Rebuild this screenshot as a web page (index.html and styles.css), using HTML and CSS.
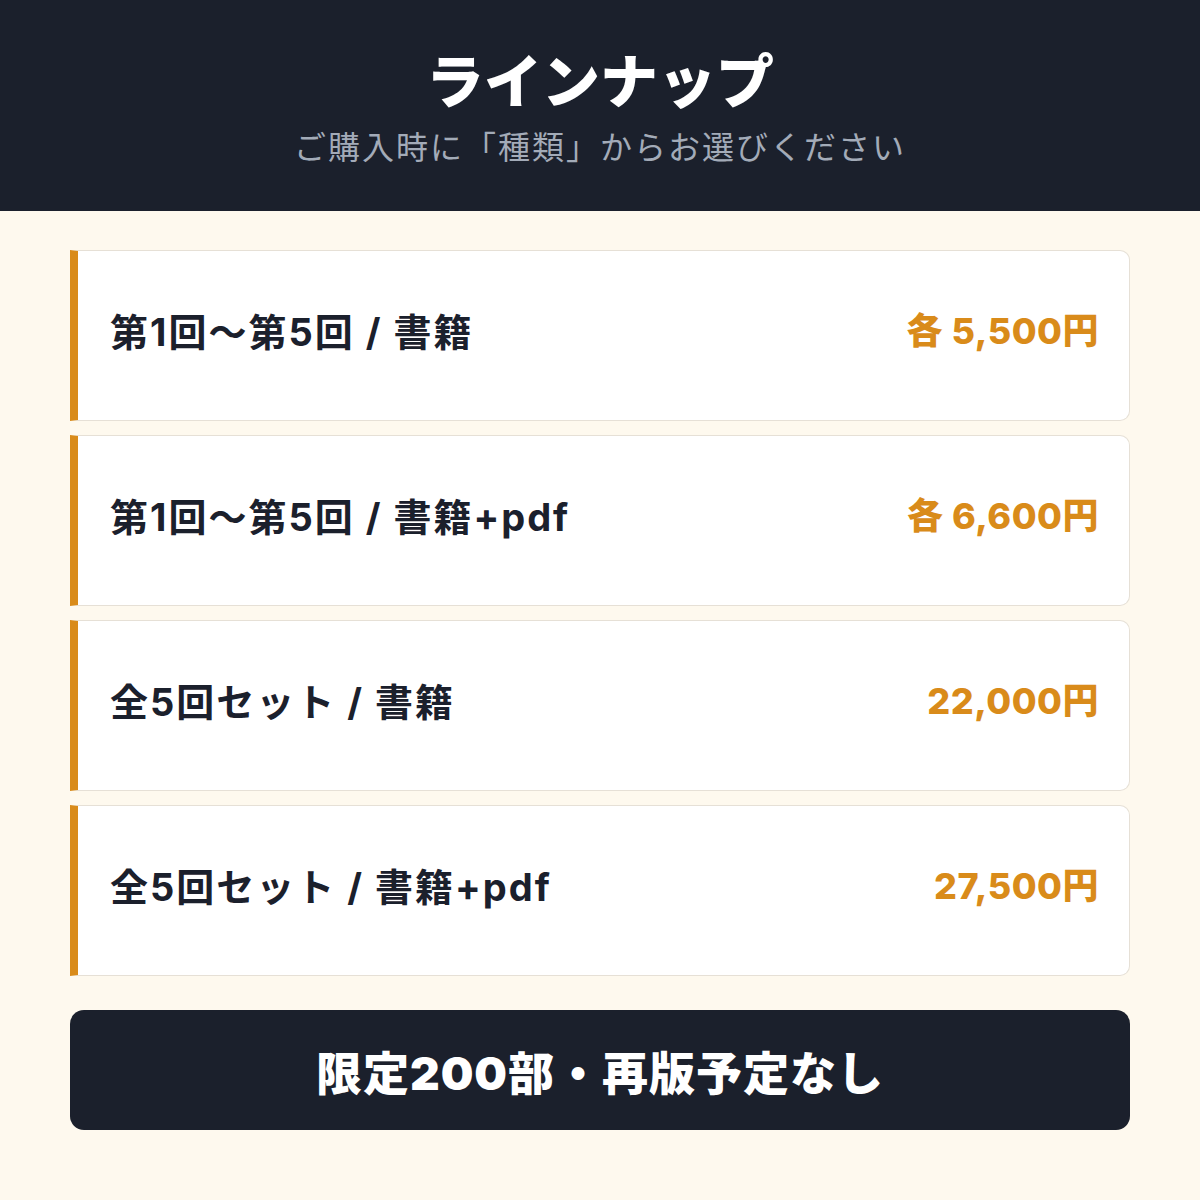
FILE: index.html
```html
<!DOCTYPE html>
<html lang="ja">
<head>
    <meta charset="UTF-8">
    <title>ラインナップ</title>
    <link rel="stylesheet" href="styles.css">
</head>
<body>
    <div class="header">
        <h1 class="title">ラインナップ</h1>
        <p class="subtitle">ご購入時に「種類」からお選びください</p>
    </div>
    <div class="main">
        <ul class="list">
            <li class="item"><span class="name">第1回〜第5回 / 書籍</span><span class="price">各 5,500円</span></li>
            <li class="item"><span class="name">第1回〜第5回 / 書籍+pdf</span><span class="price">各 6,600円</span></li>
            <li class="item"><span class="name">全5回セット / 書籍</span><span class="price">22,000円</span></li>
            <li class="item"><span class="name">全5回セット / 書籍+pdf</span><span class="price">27,500円</span></li>
        </ul>
        <div class="notice">限定200部・再版予定なし</div>
    </div>
</body>
</html>
```

FILE: styles.css
```css
* {
    margin: 0;
    padding: 0;
    box-sizing: border-box;
}
ul,li {
    list-style-type: none;
}
body {
    width: 1200px;
    height: 1200px;
    background: #fef9ee;
    font-family: Inter, "Noto Sans CJK JP", sans-serif;
    color: #1b202c;
}
/* header */
.header {
    height: 211px;
    background: #1b202c;
    text-align: center;
    padding-top: 42px;
}
.title {
    font-size: 58px;
    line-height: 80px;
    font-weight: 900;
    color: #fff;
}
.subtitle {
    font-size: 32px;
    line-height: 52px;
    letter-spacing: 2px;
    color: #a3abb8;
}
/* list */
.main {
    padding: 39px 70px 0;
}
.list {
    display: flex;
    flex-direction: column;
    gap: 14px;
}
.item {
    height: 171px;
    display: flex;
    align-items: center;
    justify-content: space-between;
    padding: 0 30px 12px 32px;
    background: #fff;
    border: 1px solid #e6e0d6;
    border-left: 8px solid #d98b1a;
    border-radius: 0 10px 10px 0;
}
.name {
    font-size: 38px;
    font-weight: 700;
    letter-spacing: 2px;
    color: #1b202c;
}
.price {
    margin-bottom: 4px;
    font-size: 36px;
    font-weight: 800;
    letter-spacing: 0.5px;
    color: #d98b1a;
}
.notice {
    margin-top: 34px;
    height: 120px;
    display: flex;
    align-items: center;
    justify-content: center;
    background: #1b202c;
    border-radius: 14px;
    color: #fff;
    font-size: 46px;
    font-weight: 900;
    letter-spacing: 1px;
}
```
